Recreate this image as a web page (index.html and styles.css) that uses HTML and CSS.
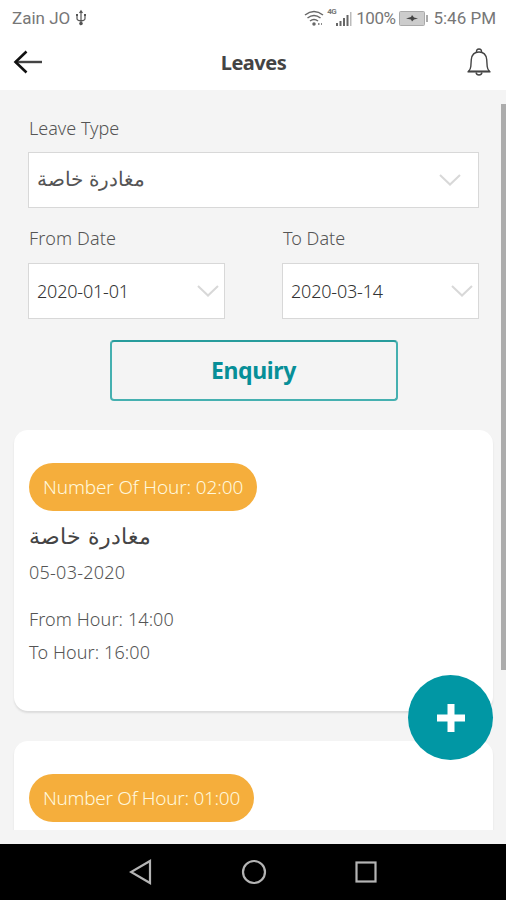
FILE: index.html
```html
<!DOCTYPE html>
<html lang="en">
<head>
<meta charset="utf-8">
<title>Leaves</title>
<link rel="stylesheet" href="styles.css">
</head>
<body>
<div class="phone">
  <div class="status">
    <span class="carrier">Zain JO</span>
    <svg class="usb" width="12" height="18" viewBox="0 0 12 18" fill="none" stroke="#555" stroke-width="1.2"><path d="M6 2v13M2 6v3.500q0 2 4 2.500M10 6v3.500q0 2-4 2.500M4.500 4 6 1.800 7.500 4"/><circle cx="6" cy="14.500" r="1.200" fill="#555"/><path d="M1 6h2M9 6h2" stroke-width="2"/></svg>
    <svg class="wifi" width="20" height="17" viewBox="0 0 20 17" fill="none" stroke="#666" stroke-width="1.500"><path d="M1 5q9-7 18 0M3.500 8q6.500-5 13 0M6 11q4-3.200 8 0"/><circle cx="10" cy="14" r="1" fill="#666"/><path d="M14 14h1.500M17 14h1"/></svg>
    <span class="net">4G</span>
    <svg class="signal" width="16" height="15" viewBox="0 0 16 15" fill="#666"><path d="M0 12h2v3H0zM3.500 10h2v5h-2zM7 7h2v8H7zM10.500 4h2v11h-2z"/><path d="M14 1h1.500v14H14z" fill="#bbb"/></svg>
    <span class="percent">100%</span>
    <svg class="battery" width="29" height="15" viewBox="0 0 29 15"><rect x=".5" y=".5" width="25" height="14" rx="1" fill="#ccc" stroke="#aaa"/><path d="M27 4h2v7h-2z" fill="#aaa"/><path d="M7 7.500 12 6l1-2 2 2.500 4 1-4 1-2 2-1-2z" fill="#444"/></svg>
    <span class="clock">5:46 PM</span>
  </div>
  <header class="bar">
    <svg class="back" width="30" height="24" viewBox="0 0 30 24" fill="none"><path d="M2 12h27" stroke="#444" stroke-width="2.400"/><path d="M13.500 1.500 2.500 12 13.500 22.500" stroke="#111" stroke-width="2.600"/></svg>
    <h1 class="title">Leaves</h1>
    <svg class="bell" width="24" height="30" viewBox="0 0 24 30" fill="none" stroke="#444" stroke-width="1.400"><path d="M1.500 24.500q2-2 2.300-5l.5-7C4.800 8 7.500 5 12 5s7.200 3 7.700 7.500l.5 7q.3 3 2.300 5z"/><path d="M1 24.500h22" stroke-width="1.800"/><path d="M9.500 5.200Q9.300 2 12 2t2.500 3.200M9 25.500Q9.500 28 12 28t3-2.500"/></svg>
  </header>
  <main class="content">
    <form class="filters">
      <div class="field">
        <label class="label l-type">Leave Type</label>
        <div class="select wide"><span class="arabic">مغادرة خاصة</span><svg class="chev" width="22" height="12" viewBox="0 0 22 12"><path d="m1 1 10 9.500L21 1"/></svg></div>
      </div>
      <div class="dates">
        <div class="field">
          <label class="label l-from">From Date</label>
          <div class="select"><span class="date">2020-01-01</span><svg class="chev" width="22" height="12" viewBox="0 0 22 12"><path d="m1 1 10 9.500L21 1"/></svg></div>
        </div>
        <div class="field">
          <label class="label l-to">To Date</label>
          <div class="select"><span class="date d-to">2020-03-14</span><svg class="chev" width="22" height="12" viewBox="0 0 22 12"><path d="m1 1 10 9.500L21 1"/></svg></div>
        </div>
      </div>
      <button class="enquiry" type="button">Enquiry</button>
    </form>
    <article class="card">
      <div class="pill">Number Of Hour: 02:00</div>
      <div class="arabic kind">مغادرة خاصة</div>
      <div class="line day">05-03-2020</div>
      <div class="line from">From Hour: 14:00</div>
      <div class="line to">To Hour: 16:00</div>
    </article>
    <article class="card">
      <div class="pill one">Number Of Hour: 01:00</div>
    </article>
  </main>
  <div class="scroll"></div>
  <div class="fab"><svg width="30" height="30" viewBox="0 0 30 30"><path d="M11.500 1h7v10.500H29v7H18.500V29h-7V18.500H1v-7h10.500z" fill="#fff"/></svg></div>
  <nav class="nav">
    <svg width="24" height="26" viewBox="0 0 24 26"><path d="M21 2v22L2 13z"/></svg>
    <svg width="26" height="26" viewBox="0 0 26 26"><circle cx="13" cy="13" r="11"/></svg>
    <svg width="22" height="22" viewBox="0 0 22 22"><rect x="1.500" y="1.500" width="19" height="19"/></svg>
  </nav>
</div>
</body>
</html>
```

FILE: styles.css
```css
* { box-sizing: border-box; }
body { margin: 0; }
.phone {
  position: relative;
  width: 506px;
  height: 900px;
  display: flex;
  flex-direction: column;
  overflow: hidden;
  background: #f4f4f4;
  font-family: "Noto Sans", "Open Sans", sans-serif;
  color: #555;
}
.status {
  display: flex;
  align-items: center;
  height: 36px;
  padding: 0 10px 0 12px;
  background: #fff;
  font: 17px/36px Roboto, sans-serif;
  color: #777;
}
.usb { margin-left: 5px; }
.wifi { margin-left: auto; }
.net { font-size: 8px; font-weight: 700; line-height: 10px; margin: -12px 0 0 3px; letter-spacing: -0.5px; }
.signal { margin-left: 0; }
.percent { margin-left: 4px; letter-spacing: -0.5px; }
.battery { margin: 0 5px 0 4px; }
.bar {
  display: flex;
  align-items: center;
  justify-content: space-between;
  height: 54px;
  padding: 0 15px 2px 13px;
  background: #fff;
}
.title {
  margin: 2px 0 0 -3px;
  font-size: 20px;
  line-height: 28px;
  font-weight: 700;
  letter-spacing: -0.5px;
  color: #444;
}
.content {
  height: 740px;
  padding: 24px 13px 0 14px;
  overflow: hidden;
}
.filters { padding: 0 14px; }
.filters .field { display: flex; flex-direction: column; }
.label {
  height: 28px;
  margin-bottom: 10px;
  padding-left: 1px;
  font-size: 18px;
  line-height: 28px;
  font-weight: 300;
  color: #555;
}
.l-from { letter-spacing: 0.15px; }
.select {
  display: flex;
  align-items: center;
  justify-content: space-between;
  height: 56px;
  padding: 0 5px 0 8px;
  border: 1px solid #d8d8d8;
  background: #fff;
}
.wide { padding-right: 17px; }
.chev path { fill: none; stroke: #d8d8d8; stroke-width: 2; }
.dates { display: flex; justify-content: space-between; margin-top: 17px; }
.dates .field { width: 197px; }
.l-from, .l-to { line-height: 26px; }
.date { font-size: 18px; color: #333; font-weight: 300; letter-spacing: -0.2px; }
.arabic { font: 300 19.600px/28px "DejaVu Sans", sans-serif; color: #555; white-space: nowrap; }
.enquiry {
  display: block;
  width: 288px;
  height: 61px;
  margin: 21px auto 29px;
  padding: 0;
  border: 2px solid #45b0b0;
  border-top-color: #279c9c;
  border-radius: 4px;
  background: transparent;
  font: 700 23px/57px "Noto Sans", sans-serif;
  letter-spacing: -0.4px;
  color: #078f98;
}
.card {
  height: 281px;
  margin-bottom: 30px;
  padding: 33px 15px 0;
  border-radius: 14px;
  background: #fff;
  box-shadow: 0 2px 2px #dcdcdc;
}
.pill {
  width: 228px;
  height: 48px;
  padding-left: 14px;
  border-radius: 24px;
  background: #f5ae3c;
  font-size: 19px;
  line-height: 48px;
  font-weight: 300;
  letter-spacing: -0.15px;
  color: #fff8dc;
  white-space: nowrap;
}
.pill.one { width: 225px; letter-spacing: -0.300px; }
.kind { margin-top: 11px; color: #444; font-size: 22.200px; }
.line { font-size: 18px; line-height: 28px; font-weight: 300; color: #555; white-space: nowrap; letter-spacing: 0.1px; }
.day { margin-top: 8px; letter-spacing: 0.250px; }
.from { margin-top: 19px; }
.to { margin-top: 5px; }
.scroll { position: absolute; left: 501px; top: 104px; width: 5px; height: 566px; background: #acacac; }
.fab {
  position: absolute;
  left: 408px;
  top: 675px;
  width: 85px;
  height: 85px;
  display: flex;
  align-items: center;
  justify-content: center;
  border-radius: 50%;
  background: #0197a4;
}
.nav {
  display: flex;
  align-items: center;
  justify-content: space-between;
  height: 56px;
  margin-top: auto;
  padding: 0 129px 0 129px;
  background: #000;
}
.nav svg { fill: none; stroke: #b4b4b4; stroke-width: 2.200; }
```
